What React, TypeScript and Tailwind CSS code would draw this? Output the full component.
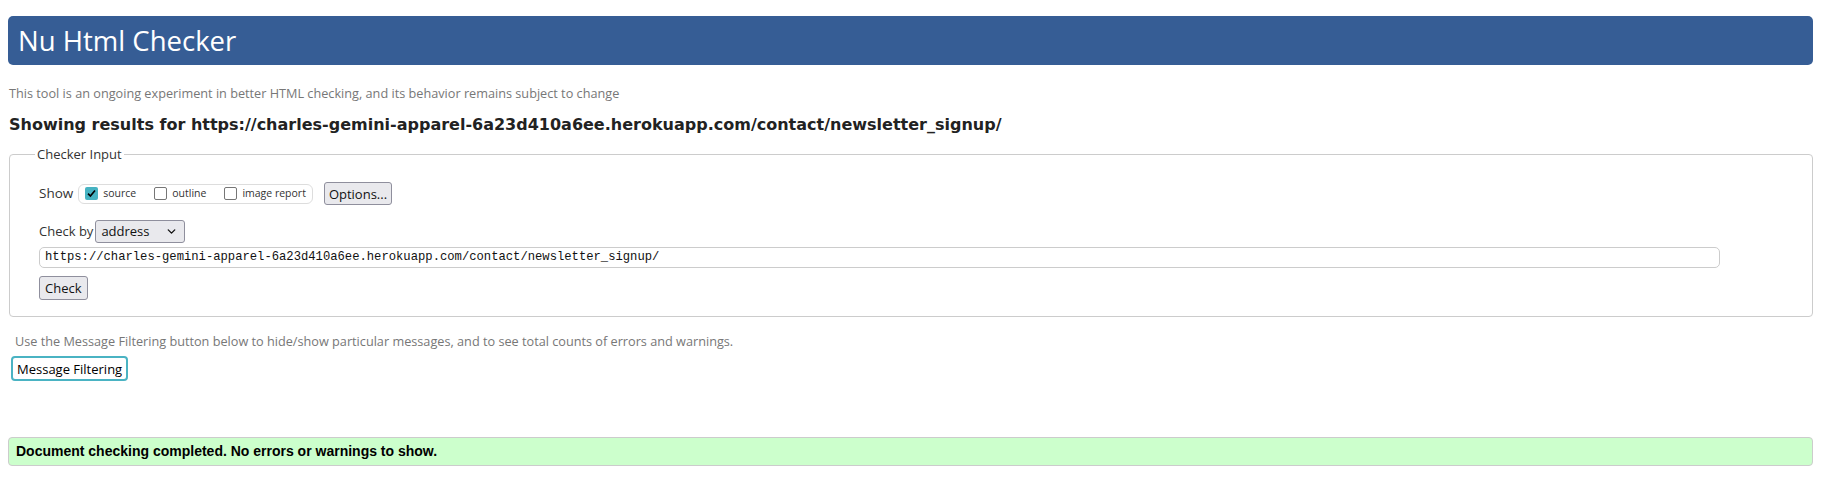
import { ChevronDown } from "lucide-react";

function Box({ checked, label }: { checked?: boolean; label: string }) {
  return (
    <label className="flex items-center gap-[5px]">
      {checked ? (
        <span className="flex h-[13px] w-[13px] items-center justify-center rounded-[2px] bg-[#46b3c2]">
          <svg viewBox="0 0 12 12" className="h-[11px] w-[11px]">
            <path d="M2.2 6.2 L4.8 8.8 L9.8 2.8" fill="none" stroke="#000" strokeWidth="1.8" />
          </svg>
        </span>
      ) : (
        <span className="h-[13px] w-[13px] rounded-[2px] border border-[#767676] bg-white" />
      )}
      <span className="text-[10.5px] text-[#333]">{label}</span>
    </label>
  );
}

export default function App() {
  return (
    <div className="min-h-screen bg-white px-[8px] pt-[16px] font-['Open_Sans','Noto_Sans',sans-serif] text-[#333]">
      {/* Banner */}
      <div className="flex h-[49px] items-center rounded-[5px] bg-[#365d95] px-[10px]">
        <h1 className="text-[27.5px] font-normal text-white">Nu Html Checker</h1>
      </div>

      <p className="mt-[20px] pl-[1px] text-[12.7px] leading-[16px] text-[#777]">
        This tool is an ongoing experiment in better HTML checking, and its behavior remains subject to change
      </p>

      <h2 className="mt-[13px] pl-[1px] font-['DejaVu_Sans',sans-serif] text-[16px] font-bold leading-[21px] text-[#222]">
        Showing results for https://charles-gemini-apparel-6a23d410a6ee.herokuapp.com/contact/newsletter_signup/
      </h2>

      {/* Checker input */}
      <fieldset className="mt-[10px] ml-[1px] rounded-[4px] border border-[#ccc]">
        <legend className="ml-[25px] px-[2px] text-[13px] leading-[18px] text-[#333]">Checker Input</legend>
        <div className="px-[29px] pt-[19px] pb-[16px]">
          <div className="flex items-center gap-[11px]">
            <div className="flex items-center gap-[5px]">
              <span className="text-[13.5px]">Show</span>
              <div className="flex h-[20px] items-center gap-[18px] rounded-[6px] border border-[#ddd] pr-[6px] pl-[6px]">
                <Box checked label="source" />
                <Box label="outline" />
                <Box label="image report" />
              </div>
            </div>
            <button className="h-[23px] rounded-[3px] border border-[#8f8f9d] bg-[#e9e9ed] px-[4px] text-[13px] leading-[20px] text-[#111]">
              Options...
            </button>
          </div>

          <div className="mt-[15px] flex items-center gap-[2px]">
            <span className="text-[13px]">Check by</span>
            <div className="flex h-[23px] w-[90px] items-center justify-between rounded-[3px] border border-[#8f8f9d] bg-[#e9e9ed] pr-[6px] pl-[5px] text-[13px] text-[#111]">
              <span>address</span>
              <ChevronDown size={13} strokeWidth={2.5} />
            </div>
          </div>

          <div className="mt-[4px] flex h-[21px] w-[1681px] items-center rounded-[5px] border border-[#ccc] bg-white px-[5px] font-['Liberation_Mono',monospace] text-[12.2px] text-[#111]">
            https://charles-gemini-apparel-6a23d410a6ee.herokuapp.com/contact/newsletter_signup/
          </div>

          <button className="mt-[8px] h-[24px] rounded-[3px] border border-[#8f8f9d] bg-[#e9e9ed] px-[5px] text-[13px] leading-[20px] text-[#111]">
            Check
          </button>
        </div>
      </fieldset>

      <p className="mt-[16px] pl-[7px] text-[12.7px] leading-[16px] text-[#777]">
        Use the Message Filtering button below to hide/show particular messages, and to see total counts of errors and warnings.
      </p>

      <button className="mt-[7px] ml-[3px] h-[25px] whitespace-nowrap rounded-[4px] border-2 border-[#4ab3c3] bg-white px-[4px] text-[13px] leading-[20px] text-[#000]">
        Message Filtering
      </button>

      <div className="mt-[56px] flex h-[29px] items-center rounded-[4px] border border-[#ccc] bg-[#ccffcc] px-[7px] font-['Liberation_Sans',sans-serif] text-[14px] font-bold text-[#000]">
        Document checking completed. No errors or warnings to show.
      </div>
    </div>
  );
}
